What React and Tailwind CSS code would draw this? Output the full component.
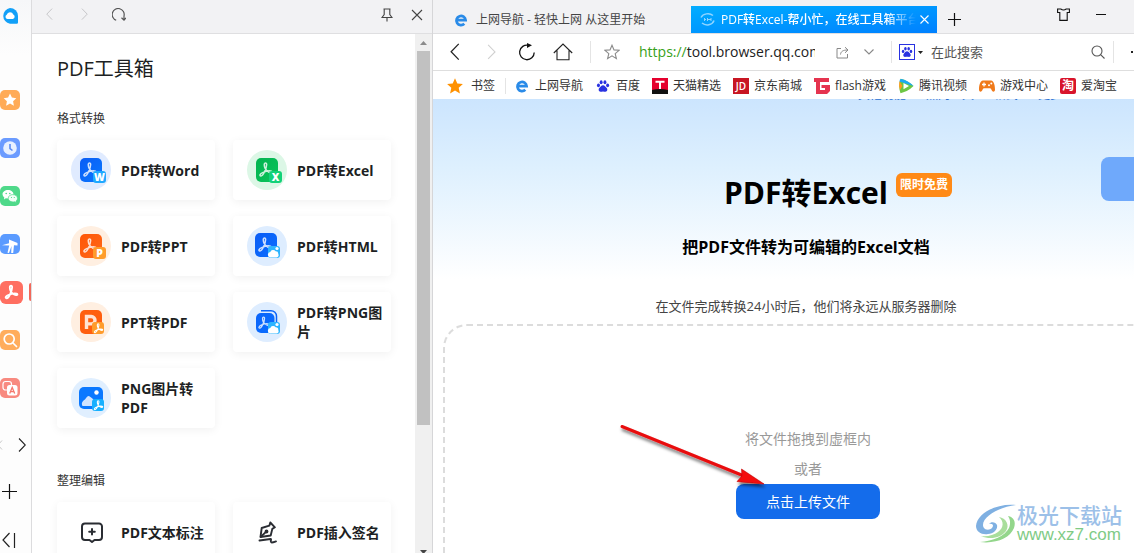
import React from "react";

const ACROBAT =
  "M5.6 19.6c-2.300-.3-1.200-2.800 2.200-4.300 3.600-1.600 8.300-2.700 10.900-1.800 2.600 1-.2 3-3.300 1.200-3.300-2-5.600-5.700-5.600-9.200 0-3.200 3.200-3.100 3-.1-.2 4.400-4.400 14.500-7.200 14.200z";

function Acrobat({ x = 0, y = 0, size = 24, width = 2 }) {
  return (
    <svg x={x} y={y} width={size} height={size} viewBox="0 0 24 24">
      <path d={ACROBAT} fill="none" stroke="#fff" strokeWidth={width} strokeLinejoin="round" />
    </svg>
  );
}

/* ---------- conversion icons ---------- */

const MiniLetter = ({ letter }) => (
  <text x="30.500" y="32" textAnchor="middle" fontSize="10.500" fontWeight="800" fontFamily="Open Sans, sans-serif" fill="#fff">
    {letter}
  </text>
);

function PdfIcon({ id, circle, from, to, badge, letter, stacked, up }) {
  const top = up ? 7 : 8;
  const left = up ? 8 : 9;
  return (
    <svg className="size-10 shrink-0" viewBox="0 0 40 40" aria-hidden="true">
      <defs>
        <linearGradient id={id} x1="0" y1="0" x2="1" y2="1">
          <stop offset="0" stopColor={from} />
          <stop offset="1" stopColor={to} />
        </linearGradient>
      </defs>
      <circle cx="20" cy="20" r="20" fill={circle} />
      {stacked && <path d="M14 8.700h10a5.500 5.500 0 0 1 5.500 5.500v10" fill="none" stroke={from} strokeWidth="1.500" />}
      <rect x={left} y={stacked ? 11 : top} width={stacked ? 18.5 : 22} height={stacked ? 20 : 24} rx="5" fill={`url(#${id})`} />
      <g opacity=".8">
        <Acrobat x={stacked ? 9 : left + 0.5} y={stacked ? 13 : top + 2.5} size={stacked ? 16 : 19} width={1.9} />
      </g>
      {letter && (
        <>
          <rect x="23" y="21" width="13" height="12" rx="3" transform="translate(-1 0)" fill={badge} />
          <g transform="translate(-2 -.8)">
            <MiniLetter letter={letter} />
          </g>
        </>
      )}
      {!letter && (
        <>
          <rect x="21" y="20" width="12" height="12" rx="3" fill={badge} />
          <circle cx="30" cy="22.500" r="1.600" fill="#fff" />
          <path d="M23 31.500a2.800 2.800 0 0 1 .3-5.500 3 3 0 0 1 5.300-.7 2.600 2.600 0 0 1 2.700 2.700c1 2-.3 3.500-1.800 3.500z" fill="#fff" />
        </>
      )}
    </svg>
  );
}

function PptIcon() {
  return (
    <svg className="size-10 shrink-0" viewBox="0 0 40 40" aria-hidden="true">
      <circle cx="20" cy="20" r="20" fill="#ffefe1" />
      <rect x="9" y="8" width="22" height="24" rx="5" fill="#ff5f0f" />
      <path d="M15.500 27V14.500h4.800a3.700 3.700 0 0 1 0 7.400h-4" fill="none" stroke="#ffe3d3" strokeWidth="3.400" />
      <rect x="21" y="20" width="12" height="12" rx="3" fill="#ff9c2b" />
      <Acrobat x={21} y={20} size={13} width={2} />
    </svg>
  );
}

function ImageIcon() {
  return (
    <svg className="size-10 shrink-0" viewBox="0 0 40 40" aria-hidden="true">
      <circle cx="20" cy="20" r="20" fill="#e0efff" />
      <rect x="8" y="9" width="24" height="22" rx="5" fill="#0a78ff" />
      <circle cx="25.500" cy="14.500" r="2.200" fill="#fff" />
      <path d="M11.500 28c-1.500-3 0-5 2.500-6.500 1.500-2 2.500-3.500 3.500-3.500s2.500 1.500 5 3.500V28z" fill="#cfe3ff" />
      <rect x="21" y="21" width="12" height="12" rx="3" fill="#16b0ff" />
      <Acrobat x={21} y={21} size={13} width={2} />
    </svg>
  );
}

function CommentIcon() {
  return (
    <svg className="size-10 shrink-0" viewBox="0 0 40 40" fill="none" stroke="#2a2d33" strokeWidth="2" strokeLinejoin="round" strokeLinecap="round" aria-hidden="true">
      <path d="M14 11.500h14a3 3 0 0 1 3 3v10.500a3 3 0 0 1-3 3h-4.500l-2.500 2-2.500-2H14a3 3 0 0 1-3-3V14.500a3 3 0 0 1 3-3z" />
      <path d="M21 17v5.500M18.200 19.700h5.600" />
    </svg>
  );
}

function SignIcon() {
  return (
    <svg className="size-10 shrink-0" viewBox="0 0 40 40" fill="none" stroke="#2a2d33" strokeWidth="1.900" strokeLinejoin="round" strokeLinecap="round" aria-hidden="true">
      <path d="M13.500 25l1.200-9 7.600-2.300 1-3.200 4.600 4.800-2.600 1.600-1.600 6.600z" />
      <path d="M13.800 24.700l5.200-4.800M12.500 28.500l11-1.500c1.500 0-.8 2.900.8 3.400 1.500.3 3.500-.6 4.700-1" />
      <circle cx="19.500" cy="19.500" r="1" fill="#2a2d33" />
    </svg>
  );
}

const CONVERT = [
  ["PDF转Word", <PdfIcon id="w" circle="#e0ebff" from="#0a5cf5" to="#0a78ff" badge="#1fa9ff" letter="W" />],
  ["PDF转Excel", <PdfIcon id="x" circle="#dcf7e6" from="#02b34f" to="#0bc45c" badge="#12d278" letter="X" />],
  ["PDF转PPT", <PdfIcon id="p" circle="#ffefe1" from="#ff5505" to="#ff6a1a" badge="#ff9c2b" letter="P" />],
  ["PDF转HTML", <PdfIcon id="h" circle="#deedff" from="#0a5cf5" to="#0a6eff" badge="#2cb4ff" up />],
  ["PPT转PDF", <PptIcon />],
  ["PDF转PNG图片", <PdfIcon id="n" circle="#deedff" from="#0a64fa" to="#0a6eff" badge="#2cb4ff" stacked />],
  ["PNG图片转PDF", <ImageIcon />],
];

const EDIT = [
  ["PDF文本标注", <CommentIcon />],
  ["PDF插入签名", <SignIcon />],
];

function ToolGrid({ title, items }) {
  return (
    <section>
      <h2 className="text-xs leading-5 text-[#333]">{title}</h2>
      <div className="mt-[11px] grid grid-cols-2 gap-x-[18px] gap-y-4">
        {items.map(([name, icon]) => (
          <button
            key={name}
            className="flex h-15 items-center gap-2.5 rounded-sm bg-white pr-1 pl-3.5 text-left text-sm leading-[19px] font-bold text-[#1d1f23] shadow-[0_2px_10px_rgba(0,0,0,0.06)]"
          >
            {icon}
            <span>{name}</span>
          </button>
        ))}
      </div>
    </section>
  );
}

/* ---------- sidebar ---------- */

const SIDE = [
  {
    name: "收藏",
    bg: "#ffab57",
    art: <path d="M10 3.600l1.900 4 4.400.6-3.200 3.100.8 4.400-3.900-2.100-3.900 2.100.8-4.400-3.200-3.100 4.400-.6z" fill="#fff" />,
  },
  {
    name: "历史",
    bg: "#6b9bff",
    art: (
      <>
        <circle cx="10" cy="10" r="6.800" fill="#e8f0ff" />
        <path d="M10 6v4.500l2.500 2" fill="none" stroke="#5a8cf5" strokeWidth="1.600" />
      </>
    ),
  },
  {
    name: "微信",
    bg: "#4fd98a",
    art: (
      <>
        <path d="M8 4c3 0 5.500 1.900 5.500 4.300S11 12.600 8 12.600l-2.200-.4L4 13.400l.3-1.900A4 4 0 0 1 2.500 8.300C2.500 5.900 5 4 8 4z" fill="#fff" />
        <path d="M12.800 8.600c2.700 0 4.700 1.600 4.700 3.700 0 1.200-.6 2.100-1.500 2.800l.2 1.500-1.600-.9c-3.400.8-6.400-1-6.400-3.400 0-2.100 2-3.700 4.600-3.700z" fill="#f2fff7" stroke="#4fd98a" strokeWidth=".7" />
        <circle cx="6.200" cy="7.500" r=".8" fill="#4fd98a" />
        <circle cx="9.800" cy="7.500" r=".8" fill="#4fd98a" />
        <circle cx="11.500" cy="11.500" r=".6" fill="#4fd98a" />
        <circle cx="14.300" cy="11.500" r=".6" fill="#4fd98a" />
      </>
    ),
  },
  {
    name: "小游戏",
    bg: "#5b9bff",
    art: <path d="M2 11.200l7-2V5.500l8.500 3.500v2.500l-3.500-.3-.8 7.800h-2l.3-7-2.500 7-1.500-.3 1.700-7.200z" fill="#fff" />,
  },
  { name: "PDF工具箱", bg: "#ff6f61", active: true, art: <Acrobat x={2} y={2} size={16} width={2.400} /> },
  {
    name: "搜索",
    bg: "#ffad5c",
    art: <path d="M9.200 4a5 5 0 1 1 0 10 5 5 0 0 1 0-10zM13 13l3.500 3.500" fill="none" stroke="#fff" strokeWidth="1.700" strokeLinecap="round" />,
  },
  {
    name: "翻译",
    bg: "#f88a80",
    art: (
      <>
        <rect x="3" y="3.500" width="8.500" height="8.500" rx="2.500" fill="none" stroke="#fff" strokeWidth="1.200" />
        <rect x="7" y="7" width="10.500" height="10.500" rx="2.500" fill="#fff" />
        <path d="M9.700 15.500l2.500-6 2.500 6M10.500 13.700h3.500" fill="none" stroke="#f5776c" strokeWidth="1.300" />
      </>
    ),
  },
];

function Sidebar() {
  return (
    <nav className="flex w-8 shrink-0 flex-col border-r border-[#dcdcde] bg-linear-to-b from-[#f6f7f9] to-[#fdfdfd] to-10%">
      <button className="mt-2 mb-[52px] ml-0.5 size-4" aria-label="QQ浏览器">
        <svg viewBox="0 0 16 16" aria-hidden="true">
          <path d="M8 0a8 8 0 0 1 8 8v6.500a1.300 1.300 0 0 1-1.300 1.300H8A8 8 0 0 1 8 0z" fill="#12a0f8" />
          <path d="M5.500 11a2.300 2.300 0 0 1-.8-4.300 3.500 3.500 0 0 1 6.600-.2 2.400 2.400 0 0 1-.5 4.500z" fill="#fff" />
        </svg>
      </button>
      {SIDE.map((s) => (
        <button key={s.name} aria-label={s.name} className="flex h-12 w-full items-center justify-between">
          <svg viewBox="0 0 20 20" className={s.active ? "size-[23px]" : "size-5"} aria-hidden="true">
            <rect width="20" height="20" rx="5" fill={s.bg} />
            {s.art}
          </svg>
          {s.active && <span className="h-[18px] w-0.5 rounded-l-xs bg-[#f2685a]" />}
        </button>
      ))}
      <div className="mt-[23px] flex h-5 items-center justify-between pr-[5px]">
        <svg className="h-3.5 w-1" viewBox="0 0 4 14" fill="none" stroke="#c8c8c8" aria-hidden="true">
          <path d="M2 2.500L-2 7l4 4.500" />
        </svg>
        <button aria-label="下一页">
          <svg className="h-3.5 w-2" viewBox="0 0 8 14" fill="none" stroke="#222" strokeWidth="1.100" aria-hidden="true">
            <path d="M1 .5L7.300 7 1 13.500" />
          </svg>
        </button>
      </div>
      <button className="mt-[26px] ml-0.5 h-5 w-4" aria-label="添加">
        <svg viewBox="0 0 16 20" stroke="#111" strokeWidth="1.200" aria-hidden="true">
          <path d="M7.500 3v15M0 10.500h15" />
        </svg>
      </button>
      <button className="mt-[29px] ml-0.5 h-5 w-4" aria-label="收起">
        <svg viewBox="0 0 16 20" fill="none" stroke="#222" strokeWidth="1.200" aria-hidden="true">
          <path d="M7.500 3L1 10l6.500 7M12.500 3v15" />
        </svg>
      </button>
    </nav>
  );
}

/* ---------- tool panel ---------- */

const Chevron = ({ left, color = "#222", w = "w-2" }) => (
  <svg className={`${w} h-auto`} viewBox="0 0 8 14" fill="none" stroke={color} strokeWidth="1" aria-hidden="true">
    <path d={left ? "M7 .7L.9 7 7 13.300" : "M1 .7L7.100 7 1 13.300"} />
  </svg>
);

function ToolPanel() {
  return (
    <aside className="flex w-[401px] shrink-0 flex-col border-r border-[#d6d6d8] bg-white">
      <div className="flex h-[34px] shrink-0 items-center border-b border-[#dfdfe1] bg-[#f2f2f4] pr-[9px] pb-1 pl-3.5">
        <button aria-label="后退"><Chevron left color="#c0c0c2" w="w-[7px]" /></button>
        <button aria-label="前进" className="ml-7"><Chevron color="#c0c0c2" w="w-[7px]" /></button>
        <button aria-label="刷新" className="ml-6">
          <svg className="size-3.5" viewBox="0 0 14 14" fill="none" stroke="#555" strokeWidth="1.200" aria-hidden="true">
            <path d="M4.200 12.200A6 6 0 1 1 12 8v4M9.500 9.800L12 12.200 14 9.800" />
          </svg>
        </button>
        <button aria-label="固定" className="ml-auto">
          <svg className="h-3.5 w-3" viewBox="0 0 12 14" fill="none" stroke="#444" strokeWidth="1.100" aria-hidden="true">
            <path d="M2.500 1h7M3.200 1v5.500L1 9.500h10L8.800 6.500V1M6 9.500V13.500" />
          </svg>
        </button>
        <button aria-label="关闭" className="ml-[18px]">
          <svg className="size-3" viewBox="0 0 12 12" stroke="#444" strokeWidth="1.100" aria-hidden="true">
            <path d="M1 1l10 10M11 1L1 11" />
          </svg>
        </button>
      </div>
      <div className="flex min-h-0 flex-1">
        <div className="min-w-0 flex-1 overflow-hidden pt-5 pr-6 pl-[25px]">
          <h1 className="mb-[25px] text-xl leading-[30px] text-[#1d1f23]">PDF工具箱</h1>
          <ToolGrid title="格式转换" items={CONVERT} />
          <div className="h-[43px]" />
          <ToolGrid title="整理编辑" items={EDIT} />
        </div>
        <div className="flex w-[17px] flex-col items-center bg-[#f0f0f0] pt-[7px]" aria-hidden="true">
          <svg className="h-1 w-[7px]" viewBox="0 0 7 4"><path d="M0 4l3.500-4L7 4z" fill="#8b8b8b" /></svg>
          <div className="mt-1.5 h-[374px] w-[13px] bg-[#c1c1c1]" />
          <svg className="mt-auto h-1 w-[7px]" viewBox="0 0 7 4"><path d="M0 1h7L3.500 5z" fill="#444" /></svg>
        </div>
      </div>
    </aside>
  );
}

/* ---------- browser ---------- */

const EIcon = () => (
  <svg className="size-4" viewBox="0 0 16 16" aria-hidden="true">
    <path d="M3.200 8.200h9.400a4.600 4.600 0 1 0-1.300 3.600" fill="none" stroke="#2a8be8" strokeWidth="2.700" />
  </svg>
);

const Paw = ({ className }) => (
  <svg className={className} viewBox="0 0 16 16" fill="#2932e1" aria-hidden="true">
    <ellipse cx="2.800" cy="7.200" rx="1.700" ry="2.200" />
    <ellipse cx="5.900" cy="3.600" rx="1.700" ry="2.300" />
    <ellipse cx="10.200" cy="3.600" rx="1.700" ry="2.300" />
    <ellipse cx="13.300" cy="7.200" rx="1.700" ry="2.200" />
    <path d="M8 7c2 0 2.800 1.700 4 3 1.700 1.800 1 4.500-1.200 4.500-1 0-1.800-.3-2.800-.3s-1.800.3-2.800.3C3 14.500 2.300 11.800 4 10c1.200-1.300 2-3 4-3z" />
  </svg>
);

const BOOKMARKS = [
  ["上网导航", <EIcon />],
  ["百度", <Paw className="size-4 p-px" />],
  [
    "天猫精选",
    <svg className="size-4" viewBox="0 0 16 16" aria-hidden="true">
      <rect width="16" height="16" fill="#e5002d" />
      <path d="M0 12q8-2 16 0v4H0z" fill="#111" />
      <path d="M3.500 3.800h9M8 3.800V11" stroke="#fff" strokeWidth="2" />
    </svg>,
  ],
  [
    "京东商城",
    <svg className="size-4" viewBox="0 0 16 16" aria-hidden="true">
      <rect width="16" height="16" fill="#c81623" />
      <text x="8" y="12" fontSize="10" fontFamily="Open Sans, sans-serif" fontWeight="600" textAnchor="middle" fill="#fff">JD</text>
    </svg>,
  ],
  [
    "flash游戏",
    <svg className="size-4" viewBox="0 0 16 16" aria-hidden="true">
      <path d="M0 0h15v4H6v8h5v-2H7.500V7H16v6l-3 3H2V4H0z" fill="#e5344f" />
    </svg>,
  ],
  [
    "腾讯视频",
    <svg className="size-4" viewBox="0 0 16 16" aria-hidden="true">
      <path d="M2.500.8Q0 8 2.500 15.200 10 13.500 15.500 8 10 2.500 2.500.8z" fill="#6cc644" />
      <path d="M2 12Q.5 8 1.400 3l3 5z" fill="#ff9a1e" />
      <path d="M1.500 3.500Q1.500.6 3.500 1 10 2.500 15.500 8L9 6z" fill="#1ba9f5" />
      <path d="M5.500 5l5.500 3-5.500 3.200z" fill="#fff" />
    </svg>,
  ],
  [
    "游戏中心",
    <svg className="size-4" viewBox="0 0 16 16" aria-hidden="true">
      <path d="M4 2.500h8c3 0 4 5.500 4 9 0 2.800-2.500 2.800-3.600.2-.3-1-.8-1.500-1.600-1.500H5.200c-.8 0-1.300.5-1.600 1.500C2.500 14.300 0 14.300 0 11.500c0-3.500 1-9 4-9z" fill="#f07a1a" />
      <path d="M5 4.500v4M3 6.500h4" stroke="#fff" strokeWidth="1.300" />
      <circle cx="10" cy="7.200" r="1" fill="#fff" />
      <circle cx="12.300" cy="5.500" r="1" fill="#fff" />
    </svg>,
  ],
  [
    "爱淘宝",
    <span className="flex size-4 items-center justify-center rounded-xs bg-[#d8142b] text-xs leading-4 font-bold text-white">淘</span>,
  ],
];

const Separator = ({ className = "" }) => <span className={`h-[22px] w-px shrink-0 bg-[#e4e4e4] ${className}`} />;

function TabBar() {
  return (
    <div className="flex h-[34px] shrink-0 items-end border-b border-[#dfdfe1] bg-[#f2f2f4] text-xs">
      <button className="flex h-[27px] w-[258px] shrink-0 items-center gap-[7px] pl-5 text-[#444]">
        <EIcon />
        <span>上网导航 - 轻快上网 从这里开始</span>
      </button>
      <div className="flex h-[27px] w-[246px] shrink-0 items-center bg-linear-to-br from-[#05adff] to-[#0080ff] pr-2 pl-[9px] text-white">
        <svg className="size-[15px] shrink-0" viewBox="0 0 15 15" fill="none" stroke="#8fd4ff" aria-hidden="true">
          <path d="M1 5.500C3 1.500 9.500.5 13 3.500M14 8.500c-1.500 4.500-8 6-12 2.500" strokeWidth="1.500" />
          <path d="M4 7.500h2M7 7.500h4M4.500 6v3M11 6v3M7.500 6v3" />
        </svg>
        <span className="ml-1.5 min-w-0 flex-1 overflow-hidden mask-r-from-85% font-medium whitespace-nowrap">
          PDF转Excel-帮小忙，在线工具箱平台
        </span>
        <button aria-label="关闭标签页" className="ml-1">
          <svg className="size-[9px]" viewBox="0 0 9 9" stroke="#fff" strokeWidth="1.100" aria-hidden="true">
            <path d="M.5.5l8 8M8.500.5l-8 8" />
          </svg>
        </button>
      </div>
      <button aria-label="新标签页" className="mb-[7px] ml-[11px]">
        <svg className="size-[13px]" viewBox="0 0 13 13" stroke="#111" strokeWidth="1.200" aria-hidden="true">
          <path d="M6.500 0v13M0 6.500h13" />
        </svg>
      </button>
      <div className="mb-3 ml-auto flex items-center gap-[26px] pr-7">
        <button aria-label="皮肤">
          <svg className="size-[13px]" viewBox="0 0 13 13" fill="none" stroke="#111" strokeWidth="1.100" aria-hidden="true">
            <path d="M.6 1h3.200q2.700 2 5.400 0h3.200v3.500h-2.200v7.900H2.800V4.500H.6z" />
          </svg>
        </button>
        <button aria-label="最小化">
          <svg className="h-3 w-2.5" viewBox="0 0 10 12" stroke="#111" aria-hidden="true"><path d="M0 5.500h10" /></svg>
        </button>
      </div>
    </div>
  );
}

function AddressBar() {
  return (
    <div className="flex h-[37px] shrink-0 items-center border-b border-[#dedede] bg-white pl-[17px]">
      <button aria-label="后退"><Chevron left w="w-[10px]" /></button>
      <button aria-label="前进" className="ml-[27px]"><Chevron color="#d0d0d0" w="w-[9px]" /></button>
      <button aria-label="刷新" className="ml-[22px]">
        <svg className="size-[18px]" viewBox="0 0 18 18" fill="none" aria-hidden="true">
          <path d="M10.500 2.300A7.300 7.300 0 1 0 16.200 9.500" stroke="#111" strokeWidth="1.300" />
          <path d="M9 0l5 2.300L9 5z" fill="#111" />
        </svg>
      </button>
      <button aria-label="主页" className="ml-[17px]">
        <svg className="size-5" viewBox="0 0 20 20" fill="none" stroke="#222" strokeWidth="1.100" aria-hidden="true">
          <path d="M.8 11L10 2l9.200 9M4 8.500v9.300h12V8.500" />
        </svg>
      </button>
      <Separator className="ml-[17px]" />
      <button aria-label="收藏" className="ml-[13px]">
        <svg className="size-4" viewBox="0 0 16 16" fill="none" stroke="#8a8a8a" strokeWidth="1.100" aria-hidden="true">
          <path d="M8 1.200l2 4.700 5 .4-3.800 3.300 1.200 5L8 11.900l-4.400 2.700 1.200-5L1 6.300l5-.4z" />
        </svg>
      </button>
      <a href="#page" className="ml-[19px] w-[176px] shrink-0 overflow-hidden text-sm leading-6 whitespace-nowrap text-[#222]">
        <span className="text-[#37a119]">https://</span>tool.browser.qq.com
      </a>
      <button aria-label="分享" className="ml-[21px]">
        <svg className="size-[13px]" viewBox="0 0 13 13" fill="none" stroke="#888" aria-hidden="true">
          <path d="M5 2.500H1v9.500h10.500V8M4.500 8.500c.3-3 2.500-4.500 7-4.500M9 1.200L12 4 9 6.800" />
        </svg>
      </button>
      <button aria-label="展开" className="ml-[15px]">
        <svg className="h-2 w-[10px]" viewBox="0 0 10 8" fill="none" stroke="#888" strokeWidth="1.100" aria-hidden="true">
          <path d="M.5 1.500L5 6l4.500-4.500" />
        </svg>
      </button>
      <Separator className="ml-[17px]" />
      <button aria-label="搜索引擎" className="ml-[7px] flex items-center gap-[3px]">
        <span className="border border-[#2932e1]"><Paw className="size-3.5 p-px" /></span>
        <svg className="h-[3px] w-[5px]" viewBox="0 0 5 3" aria-hidden="true"><path d="M0 0h5L2.500 3z" fill="#222" /></svg>
      </button>
      <input aria-label="搜索" placeholder="在此搜索" className="ml-2 min-w-0 flex-1 text-[13px] leading-5 outline-none placeholder:text-[#555]" />
      <button aria-label="开始搜索">
        <svg className="size-3.5" viewBox="0 0 14 14" fill="none" stroke="#555" strokeWidth="1.100" aria-hidden="true">
          <circle cx="6" cy="6" r="5" />
          <path d="M9.600 9.600L13.500 13.500" />
        </svg>
      </button>
      <Separator className="ml-2" />
      <span className="mr-px ml-[17px] size-0.5 bg-[#222]" />
    </div>
  );
}

function Bookmarks() {
  return (
    <div className="flex h-7 shrink-0 items-center gap-3 overflow-hidden bg-white pt-px pl-3.5 text-xs whitespace-nowrap text-[#333]">
      <a href="#bookmarks" className="flex items-center gap-2">
        <svg className="size-4" viewBox="0 0 16 16" aria-hidden="true">
          <path d="M8 .3l2.300 5.200 5.600.5-4.200 3.800 1.200 5.600L8 12.500l-4.900 2.900 1.200-5.600L.1 6l5.600-.5z" fill="#ff9100" />
        </svg>
        书签
      </a>
      <Separator className="-mr-1 -ml-0.5 !h-4" />
      {BOOKMARKS.map(([name, icon]) => (
        <a key={name} href="#site" className="flex shrink-0 items-center gap-[5px]">
          {icon}
          {name}
        </a>
      ))}
    </div>
  );
}

function Arrow() {
  return (
    <svg className="pointer-events-none absolute -top-[62px] -left-[118px] h-[70px] w-[152px]" viewBox="0 0 152 70" aria-hidden="true">
      <defs>
        <filter id="soft" x="-10%" y="-20%" width="120%" height="150%">
          <feDropShadow dx="1" dy="3" stdDeviation="1.800" floodColor="#000" floodOpacity=".5" />
        </filter>
      </defs>
      <g filter="url(#soft)">
        <path d="M4 4.500L126 54" stroke="#e8090c" strokeWidth="3" strokeLinecap="round" />
        <path d="M146 62L119 59.500l5-5.500-.5-7z" fill="#f40a0a" stroke="#c20000" strokeWidth=".6" />
      </g>
    </svg>
  );
}

function Watermark() {
  return (
    <div className="absolute right-3 bottom-[9px] flex items-center">
      <svg className="h-10 w-[42px]" viewBox="0 0 42 40" fill="none" aria-hidden="true">
        <path d="M41 1C22-1 2 9 1 22c0 6 6 9 12 8 6 0 10-5 9-9-1-3-6-4-8-1 4-1 5 2 3 4-3 3-9 2-9-3C8 12 25 3 41 1z" fill="#7fb0e2" />
        <path d="M33 12c6 1 8 6 6 12-4 10-18 16-34 14 13-1 25-6 29-14 2-5 1-9-1-12z" fill="#93d68b" />
        <path d="M24 13c5 4 5 11-1 15-4 3-11 5-17 4 9 4 20 2 25-5 4-6 0-13-7-14z" fill="#a9de9c" />
      </svg>
      <div className="flex flex-col">
        <span className="text-[21px] leading-[22px] font-medium text-[#9cc0e8]">极光下载站</span>
        <span className="font-['Liberation_Sans',sans-serif] text-[17px] leading-[18px] text-[#7fcb86]">www.xz7.com</span>
      </div>
    </div>
  );
}

function Page() {
  return (
    <main id="page" className="relative flex min-h-0 flex-1 flex-col overflow-hidden bg-[linear-gradient(180deg,#cce5fe_0px,#def0fe_70px,#ffffff_180px)]">
      <div className="-mr-[45px] flex flex-1 flex-col items-center">
        <div className="flex h-[3px] items-end self-stretch overflow-hidden pl-[425px] text-xs leading-[15px] whitespace-nowrap text-[#2b6fd0]">
          <span>其他功能</span>
          <span className="ml-5">热门工具</span>
          <span className="ml-5">格式</span>
          <span className="ml-5">更多</span>
        </div>
        <h1 className="relative mt-[71px] text-[30px] leading-10 font-bold text-black">
          PDF转Excel
          <span className="absolute top-0 left-full ml-2 rounded-md bg-[#ff8a17] px-1 text-xs leading-6 font-bold whitespace-nowrap text-white">
            限时免费
          </span>
        </h1>
        <p className="mt-[22px] text-base leading-6 font-bold text-black">把PDF文件转为可编辑的Excel文档</p>
        <p className="mt-[37px] text-[13px] leading-5 text-[#444]">在文件完成转换24小时后，他们将永远从服务器删除</p>
        <div className="mt-2 mr-1.5 ml-2.5 flex flex-1 flex-col items-center self-stretch rounded-t-3xl border-2 border-b-0 border-dashed border-[#dcdcdc] bg-white pt-[98px]">
          <p className="text-sm leading-[30px] text-[#999]">将文件拖拽到虚框内</p>
          <p className="text-sm leading-[30px] text-[#999]">或者</p>
          <div className="relative">
            <button className="h-[35px] w-36 rounded-lg bg-[#146ceb] text-sm text-white">点击上传文件</button>
            <Arrow />
          </div>
        </div>
      </div>
      <button aria-label="登录" className="absolute top-[58px] -right-2 h-11 w-[41px] rounded-lg bg-[#6fa9fb]" />
      <Watermark />
    </main>
  );
}

export default function App() {
  return (
    <div className="flex h-screen overflow-hidden bg-white font-['Open_Sans','Noto_Sans_CJK_SC',sans-serif]">
      <Sidebar />
      <ToolPanel />
      <div className="flex min-w-0 flex-1 flex-col">
        <TabBar />
        <AddressBar />
        <Bookmarks />
        <Page />
      </div>
    </div>
  );
}
